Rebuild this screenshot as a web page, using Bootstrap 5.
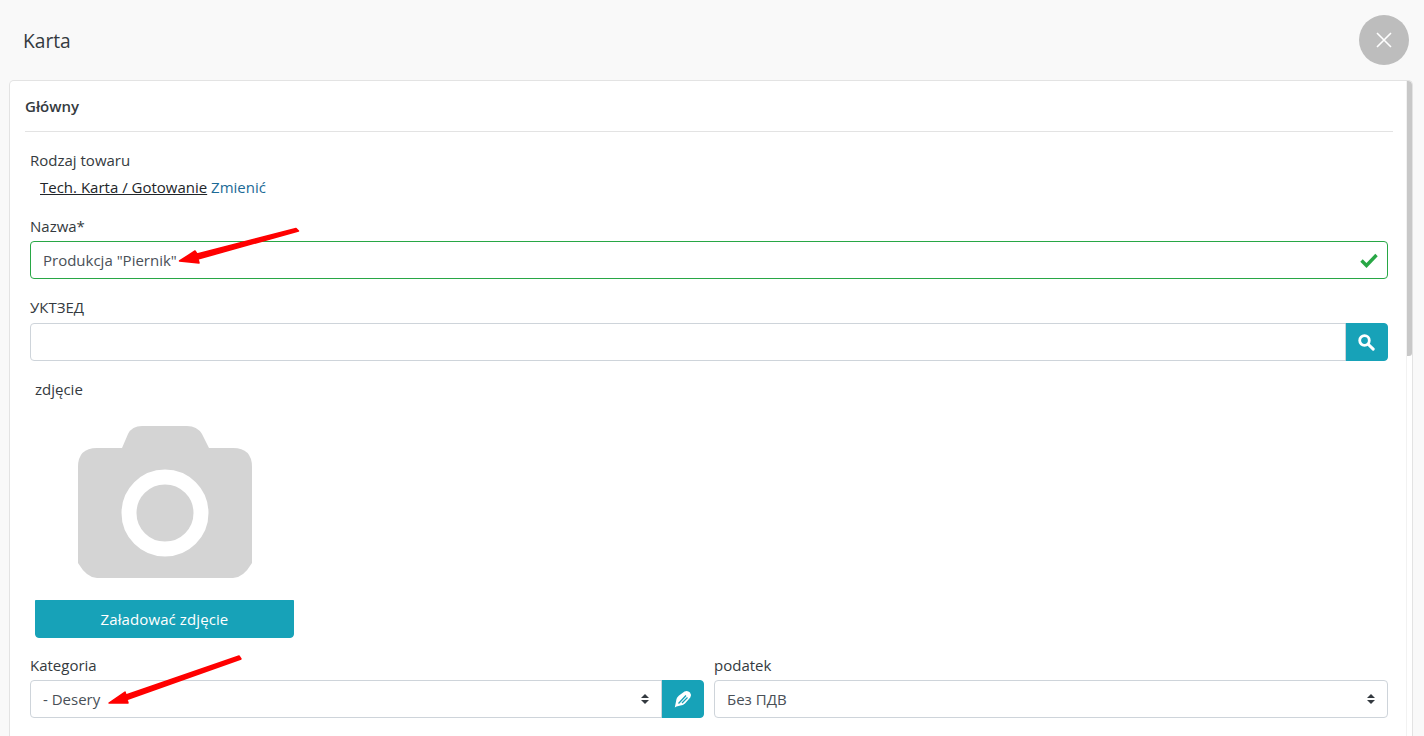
<!DOCTYPE html>
<html lang="pl">
<head>
<meta charset="utf-8">
<title>Karta</title>
<link rel="stylesheet" href="https://cdn.jsdelivr.net/npm/bootstrap@5.3.0/dist/css/bootstrap.min.css">
<style>
html,body{height:100%;overflow:hidden}
body{background:#f9f9f9;color:#343a40;font-family:"Open Sans","Noto Sans",sans-serif;font-size:15px;line-height:21px;position:relative}
.top-bar{height:80px;padding:0 15px 0 23px}
.top-title{font-size:19.2px;font-weight:400;margin:2px 0 0;color:#343a40}
.close-round{width:50px;height:50px;border-radius:50%;background:#bdbdbd;border:0;padding:0;margin-top:-1px}
.sheet{margin:0 11px 0 9px;height:656px;border:1px solid #e3e3e3;border-bottom:0;border-radius:5px 5px 0 0;background:#fff;padding:0 19px 0 15px;position:relative;overflow:hidden}
.sheet-head{height:51px;border-bottom:1px solid #e3e3e3;font-weight:600;line-height:50px;font-size:15px}
.thumb{position:absolute;top:0;right:0;width:5px;height:275px;background:#c8c8c8;border-radius:0 3px 3px 0}
.track{position:absolute;top:0;right:5px;bottom:0;width:1px;background:#f2f2f2}
.fields{padding:0 5px}
.field-label{display:block;margin:0;height:21px;color:#343a40}
.label-spaced{margin-top:18px}
.gap-input{margin-top:4px}
.gap-group{margin-top:5px}
.form-control,.form-select{height:38px;font-size:15px;color:#495057;border-color:#ced4da;border-radius:4px;padding:6px 12px;line-height:24px}
.form-control.is-valid{border-color:#28a745;background-image:url("data:image/svg+xml,%3Csvg xmlns='http://www.w3.org/2000/svg' viewBox='0 0 18 15'%3E%3Cpath fill='none' stroke='%2328a745' stroke-width='3.4' d='M1.5 7.5l5 5L16.5 2'/%3E%3C/svg%3E");background-size:18px 15px;background-position:right 9px center;padding-right:36px}
.form-select{background-image:url("data:image/svg+xml,%3Csvg xmlns='http://www.w3.org/2000/svg' viewBox='0 0 4 5'%3E%3Cpath fill='%23343a40' d='M2 0L0 2h4zm0 5L0 3h4z'/%3E%3C/svg%3E");background-size:8px 10px;background-position:right 12px center}
.teal-btn{background:#17a2b8;border:1px solid #17a2b8;color:#fff;border-radius:4px;font-size:15px;font-weight:500;letter-spacing:.1px}
.teal-square{width:43px;height:38px;padding:0;display:flex;align-items:center;justify-content:center}
.type-row{margin:6px 0 0 10px;height:21px}
.type-row .kind{color:#212529;text-decoration:underline}
.type-row .change{color:#1c6a96;text-decoration:none}
.photo-label{margin:18px 0 0 5px;height:21px}
.photo-box{margin:26px 0 0 5px;width:259px}
.photo-pic{display:block;margin-left:43px}
.upload-btn{display:block;width:259px;height:38px;margin-top:22px;padding:0;border-radius:0 0 4px 4px}
.cols{--bs-gutter-x:10px;margin:17px -5px 0}
.cols .field-label{margin-bottom:4px}
.marks{position:absolute;inset:0;pointer-events:none}
</style>
</head>
<body>
<header class="top-bar d-flex align-items-center justify-content-between">
  <h1 class="top-title">Karta</h1>
  <button type="button" class="close-round d-flex align-items-center justify-content-center" aria-label="Zamknij">
    <svg width="16" height="16" viewBox="0 0 16 16"><path d="M1 1l14 14M15 1L1 15" stroke="#fff" stroke-width="1.6" fill="none"/></svg>
  </button>
</header>
<main class="sheet">
  <div class="track"></div>
  <div class="thumb"></div>
  <div class="sheet-head">Główny</div>
  <div class="fields">
    <label class="field-label label-spaced">Rodzaj towaru</label>
    <div class="type-row"><a class="kind" href="#">Tech. Karta / Gotowanie</a> <a class="change" href="#">Zmienić</a></div>
    <label class="field-label label-spaced">Nazwa*</label>
    <input class="form-control is-valid gap-input" type="text" value="Produkcja &quot;Piernik&quot;">
    <label class="field-label label-spaced">УКТЗЕД</label>
    <div class="input-group gap-group">
      <input class="form-control" type="text">
      <button type="button" class="teal-btn teal-square" aria-label="Szukaj">
        <svg width="17" height="17" viewBox="0 0 17 17"><circle cx="6.5" cy="6.5" r="4.8" fill="none" stroke="#fff" stroke-width="2.8"/><path d="M10.2 10.2l5 4.9" stroke="#fff" stroke-width="3" stroke-linecap="round"/></svg>
      </button>
    </div>
    <div class="photo-label">zdjęcie</div>
    <div class="photo-box">
      <svg class="photo-pic" width="174" height="152" viewBox="0 0 174 152"><path fill="#d4d4d4" d="M44 22L50 8Q54 0 64 0H109Q119 0 124 8L131 22H155Q174 22 174 41V137Q165 152 155 152H19Q9 152 0 137V41Q0 22 19 22Z"/><circle cx="87" cy="87" r="36" fill="#d4d4d4" stroke="#fff" stroke-width="15"/></svg>
      <button type="button" class="teal-btn upload-btn">Załadować zdjęcie</button>
    </div>
    <div class="row cols">
      <div class="col-6">
        <label class="field-label">Kategoria</label>
        <div class="input-group">
          <select class="form-select"><option>- Desery</option></select>
          <button type="button" class="teal-btn teal-square" aria-label="Edytuj">
            <svg width="18" height="18" viewBox="0 0 18 18"><path fill="#fff" d="M0.800 17.500L2.500 9Q3 7 5 5.500L10.500 1.500Q13.500 0 16 2.500Q18 5 16.300 7.500L11 13.500Q9 15.500 6.500 15.500L2.500 16.500Z"/><path fill="none" stroke="#17a2b8" stroke-width="1.300" d="M4.500 13.500L12 5.500M8 13L13.500 7.500"/></svg>
          </button>
        </div>
      </div>
      <div class="col-6">
        <label class="field-label">podatek</label>
        <select class="form-select"><option>Без ПДВ</option></select>
      </div>
    </div>
  </div>
</main>
<svg class="marks" width="1424" height="736" viewBox="0 0 1424 736">
  <path fill="#f00" stroke="#f00" stroke-width="1.500" stroke-linejoin="round" d="M296 228.500L298.500 231L198 259L199 263L179.500 261L195 251L197 254Z"/>
  <path fill="#f00" stroke="#f00" stroke-width="1.500" stroke-linejoin="round" d="M239 656L241 659L127 699.500L128 703L109 703L125 692L126 695Z"/>
</svg>
</body>
</html>
